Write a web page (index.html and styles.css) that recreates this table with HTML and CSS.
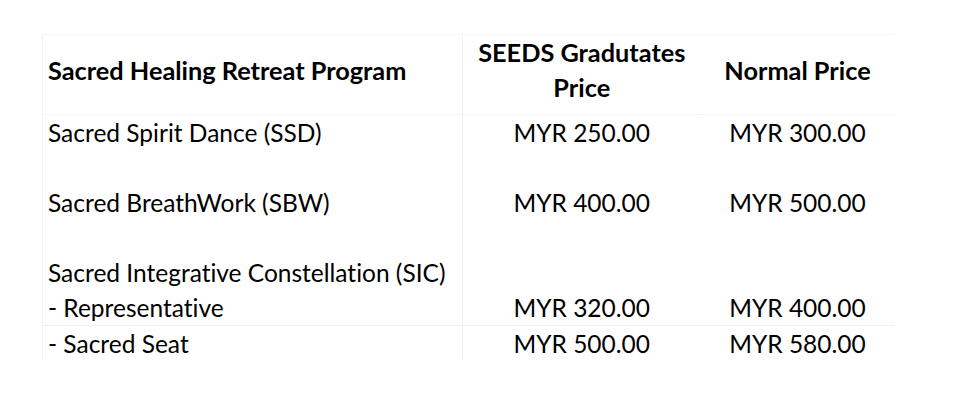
FILE: index.html
```html
<!DOCTYPE html>
<html>
<head>
<meta charset="utf-8">
<link rel="stylesheet" href="styles.css">
</head>
<body>
<table class="prices">
  <colgroup>
    <col class="c-name">
    <col class="c-seeds">
    <col class="c-normal">
  </colgroup>
  <thead>
    <tr class="head">
      <th class="name">Sacred Healing Retreat Program</th>
      <th class="num">SEEDS Gradutates<br>Price</th>
      <th class="num last">Normal Price</th>
    </tr>
  </thead>
  <tbody>
    <tr class="tall">
      <td class="name">Sacred Spirit Dance (SSD)</td>
      <td class="num">MYR 250.00</td>
      <td class="num last">MYR 300.00</td>
    </tr>
    <tr class="tall">
      <td class="name">Sacred BreathWork (SBW)</td>
      <td class="num">MYR 400.00</td>
      <td class="num last">MYR 500.00</td>
    </tr>
    <tr>
      <td class="name">Sacred Integrative Constellation (SIC)</td>
      <td class="num"></td>
      <td class="num last"></td>
    </tr>
    <tr class="ruled">
      <td class="name">- Representative</td>
      <td class="num">MYR 320.00</td>
      <td class="num last">MYR 400.00</td>
    </tr>
    <tr>
      <td class="name">- Sacred Seat</td>
      <td class="num">MYR 500.00</td>
      <td class="num last">MYR 580.00</td>
    </tr>
  </tbody>
</table>
</body>
</html>
```
FILE: styles.css
```css
html, body {
  margin: 0;
  padding: 0;
  background: #ffffff;
}

body {
  padding: 34px 0 0 42px;
  font-family: Lato, "Open Sans", sans-serif;
  font-variant-ligatures: none;
  color: #000000;
}

.prices {
  border-collapse: collapse;
  table-layout: fixed;
  width: 852px;
}

.c-name { width: 420px; }
.c-seeds { width: 238px; }
.c-normal { width: 194px; }

.prices th,
.prices td {
  padding: 0;
  font-size: 24.5px;
  line-height: 35px;
  border-left: 1px solid #f2f2f2;
}

.prices th.last,
.prices td.last {
  border-left: none;
}

.head th {
  font-weight: 700;
  font-size: 25.3px;
  height: 70px;
  padding-bottom: 9px;
  vertical-align: middle;
  border-top: 1px solid #f6f6f6;
  border-bottom: 1px dotted #ececec;
}

.prices .name {
  text-align: left;
  padding-left: 5px;
}

.prices .num {
  text-align: center;
}

.prices td {
  vertical-align: top;
  height: 35px;
}

.tall td {
  height: 70px;
}

.ruled td {
  border-bottom: 1px solid #efefef;
}
```
